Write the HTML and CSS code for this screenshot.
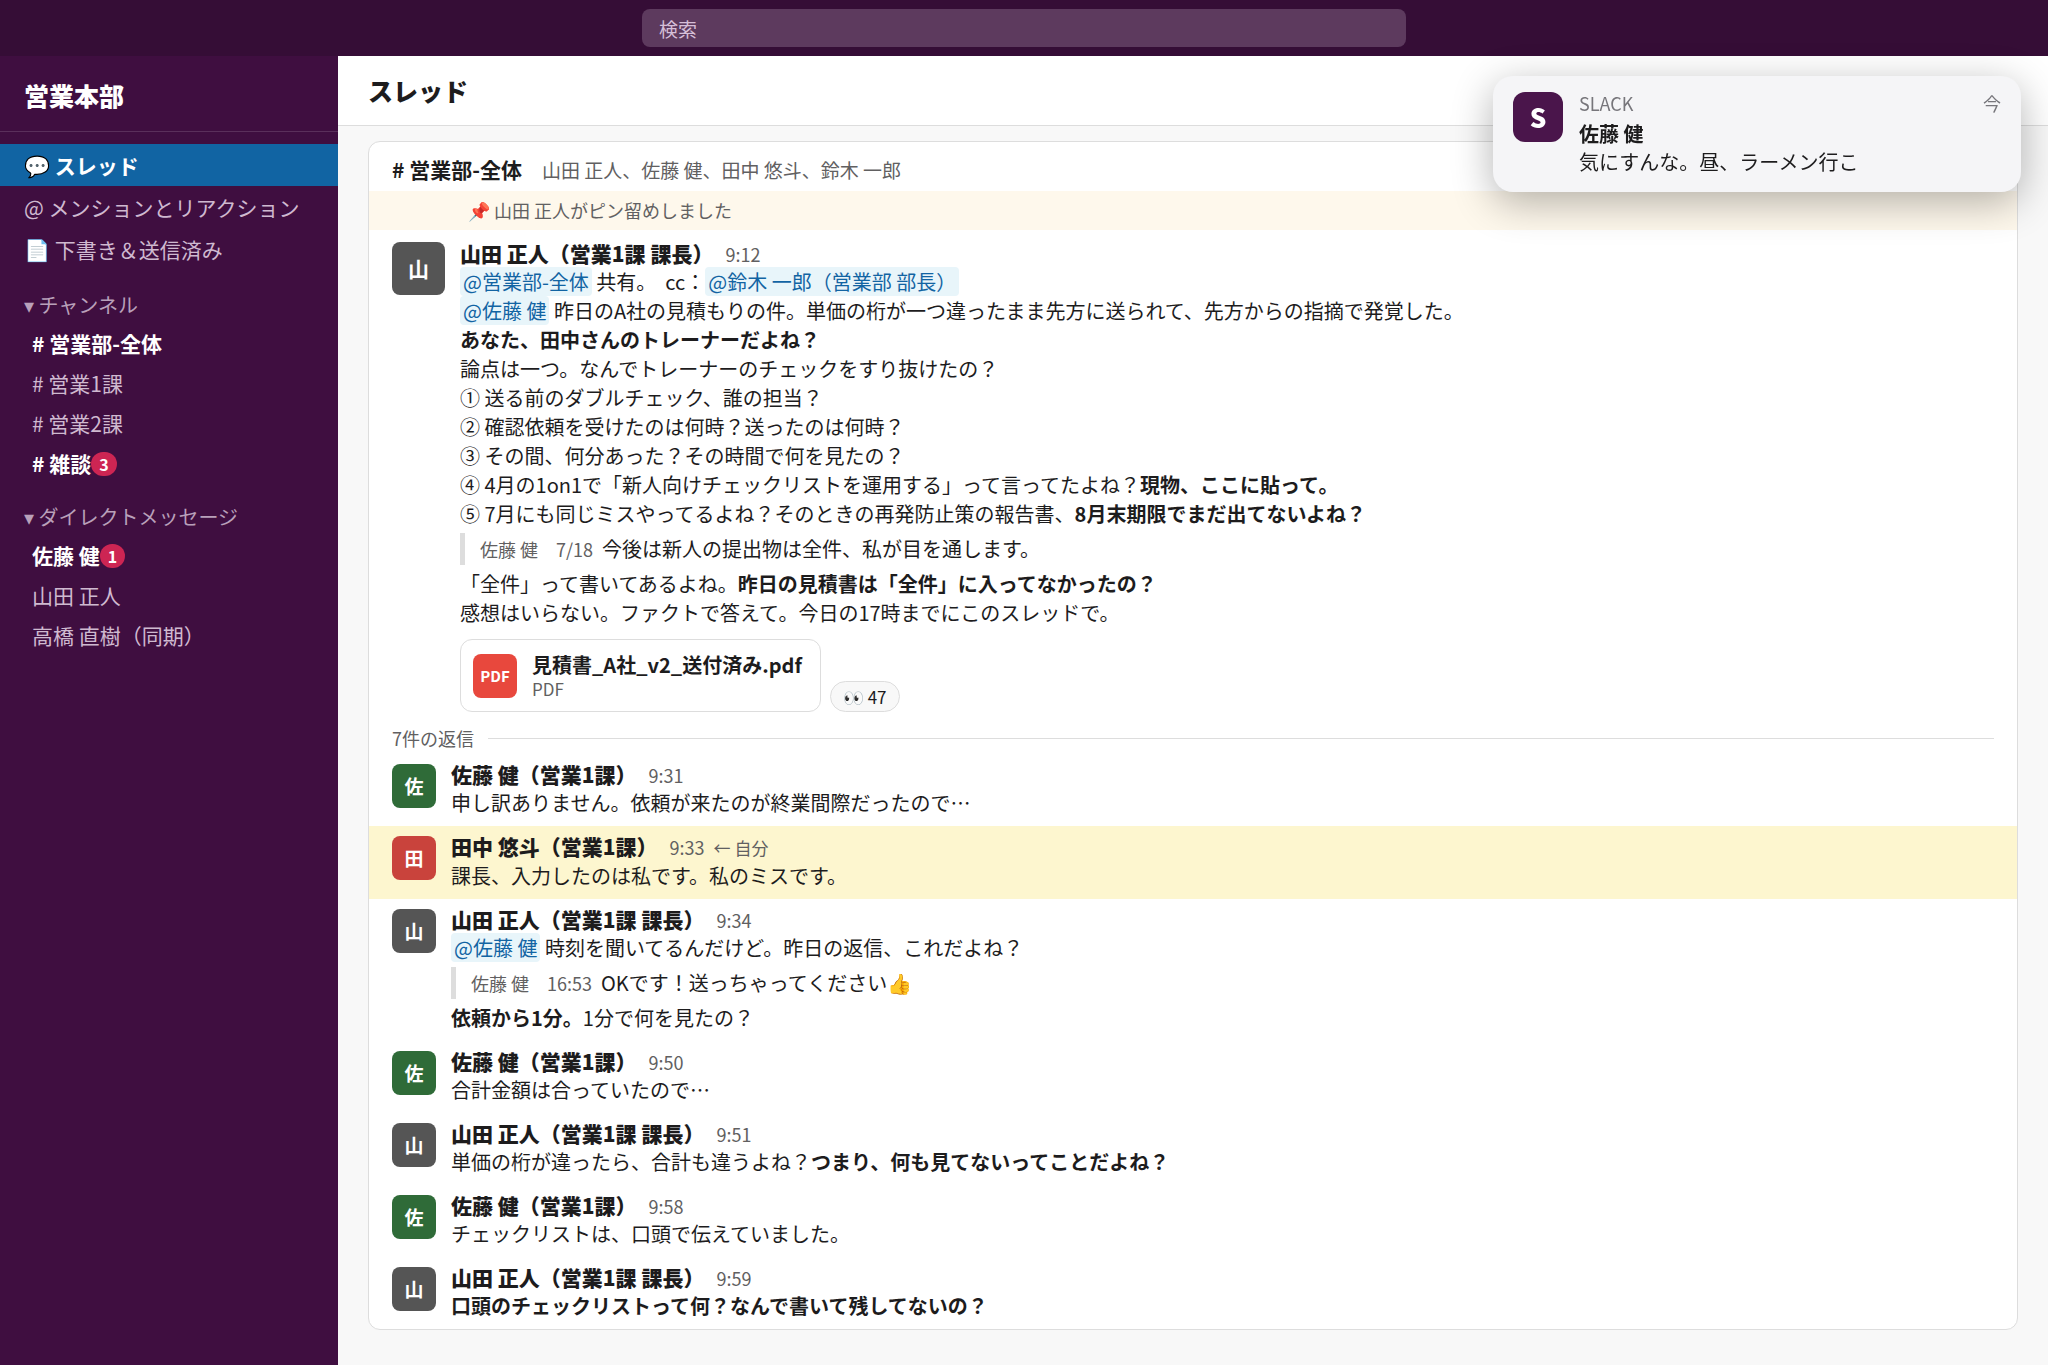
FILE: index.html
```html
<!DOCTYPE html>
<html lang="ja"><head>
  <meta charset="UTF-8"/>
  <meta name="viewport" content="width=device-width,initial-scale=1"/>
  <title>スレッド - 営業本部</title>
  <link rel="stylesheet" href="styles.css">
</head><body>
  <header class="topbar">
    <input class="search" type="search" placeholder="検索" aria-label="検索">
  </header>

  <div class="layout">
    <nav class="sidebar">
      <div class="workspace">営業本部</div>
      <ul class="nav-list">
        <li><a class="nav-item active" href="#threads">💬 スレッド</a></li>
        <li><a class="nav-item" href="#mentions">@ メンションとリアクション</a></li>
        <li><a class="nav-item" href="#drafts">📄 下書き＆送信済み</a></li>
      </ul>
      <h2 class="section-title">▾ チャンネル</h2>
      <ul class="channel-list">
        <li><a class="channel unread" href="#all"># 営業部-全体</a></li>
        <li><a class="channel" href="#sales1"># 営業1課</a></li>
        <li><a class="channel" href="#sales2"># 営業2課</a></li>
        <li><a class="channel unread" href="#random"># 雑談<span class="badge">3</span></a></li>
      </ul>
      <h2 class="section-title">▾ ダイレクトメッセージ</h2>
      <ul class="channel-list">
        <li><a class="channel unread" href="#sato">佐藤 健<span class="badge">1</span></a></li>
        <li><a class="channel" href="#yamada">山田 正人</a></li>
        <li><a class="channel" href="#takahashi">高橋 直樹（同期）</a></li>
      </ul>
    </nav>

    <main class="main">
      <h1 class="page-title">スレッド</h1>

      <section class="thread">
        <div class="thread-head">
          <strong class="thread-channel"># 営業部-全体</strong>
          <span class="thread-members">山田 正人、佐藤 健、田中 悠斗、鈴木 一郎</span>
        </div>
        <div class="pinned">📌 山田 正人がピン留めしました</div>

        <article class="message root">
          <div class="avatar gray">山</div>
          <div class="body">
            <div class="meta"><span class="name">山田 正人（営業1課 課長）</span><time class="time">9:12</time></div>
            <p><a class="mention" href="#all">@営業部-全体</a> 共有。&nbsp; cc：<a class="mention" href="#suzuki">@鈴木 一郎（営業部 部長）</a></p>
            <p><a class="mention" href="#sato">@佐藤 健</a> 昨日のA社の見積もりの件。単価の桁が一つ違ったまま先方に送られて、先方からの指摘で発覚した。</p>
            <p><b>あなた、田中さんのトレーナーだよね？</b></p>
            <p>論点は一つ。なんでトレーナーのチェックをすり抜けたの？</p>
            <p>① 送る前のダブルチェック、誰の担当？</p>
            <p>② 確認依頼を受けたのは何時？送ったのは何時？</p>
            <p>③ その間、何分あった？その時間で何を見たの？</p>
            <p>④ 4月の1on1で「新人向けチェックリストを運用する」って言ってたよね？<b>現物、ここに貼って。</b></p>
            <p>⑤ 7月にも同じミスやってるよね？そのときの再発防止策の報告書、<b>8月末期限でまだ出てないよね？</b></p>
            <blockquote class="quote"><span class="quote-meta">佐藤 健　7/18</span>今後は新人の提出物は全件、私が目を通します。</blockquote>
            <p>「全件」って書いてあるよね。<b>昨日の見積書は「全件」に入ってなかったの？</b></p>
            <p>感想はいらない。ファクトで答えて。今日の17時までにこのスレッドで。</p>
            <div class="extras">
              <a class="file" href="#file">
                <span class="file-icon">PDF</span>
                <span class="file-info"><span class="file-name">見積書_A社_v2_送付済み.pdf</span><span class="file-type">PDF</span></span>
              </a>
              <button class="reaction" type="button">👀 47</button>
            </div>
          </div>
        </article>

        <div class="reply-count">7件の返信</div>

        <article class="message">
          <div class="avatar green">佐</div>
          <div class="body">
            <div class="meta"><span class="name">佐藤 健（営業1課）</span><time class="time">9:31</time></div>
            <p>申し訳ありません。依頼が来たのが終業間際だったので…</p>
          </div>
        </article>
        <article class="message mine">
          <div class="avatar red">田</div>
          <div class="body">
            <div class="meta"><span class="name">田中 悠斗（営業1課）</span><time class="time">9:33</time><span class="self">← 自分</span></div>
            <p>課長、入力したのは私です。私のミスです。</p>
          </div>
        </article>
        <article class="message">
          <div class="avatar gray">山</div>
          <div class="body">
            <div class="meta"><span class="name">山田 正人（営業1課 課長）</span><time class="time">9:34</time></div>
            <p><a class="mention" href="#sato">@佐藤 健</a> 時刻を聞いてるんだけど。昨日の返信、これだよね？</p>
            <blockquote class="quote"><span class="quote-meta">佐藤 健　16:53</span>OKです！送っちゃってください👍</blockquote>
            <p><b>依頼から1分。</b>1分で何を見たの？</p>
          </div>
        </article>
        <article class="message">
          <div class="avatar green">佐</div>
          <div class="body">
            <div class="meta"><span class="name">佐藤 健（営業1課）</span><time class="time">9:50</time></div>
            <p>合計金額は合っていたので…</p>
          </div>
        </article>
        <article class="message">
          <div class="avatar gray">山</div>
          <div class="body">
            <div class="meta"><span class="name">山田 正人（営業1課 課長）</span><time class="time">9:51</time></div>
            <p>単価の桁が違ったら、合計も違うよね？<b>つまり、何も見てないってことだよね？</b></p>
          </div>
        </article>
        <article class="message">
          <div class="avatar green">佐</div>
          <div class="body">
            <div class="meta"><span class="name">佐藤 健（営業1課）</span><time class="time">9:58</time></div>
            <p>チェックリストは、口頭で伝えていました。</p>
          </div>
        </article>
        <article class="message">
          <div class="avatar gray">山</div>
          <div class="body">
            <div class="meta"><span class="name">山田 正人（営業1課 課長）</span><time class="time">9:59</time></div>
            <p><b>口頭のチェックリストって何？なんで書いて残してないの？</b></p>
          </div>
        </article>
      </section>
    </main>
  </div>

  <aside class="toast" role="status">
    <div class="toast-icon">S</div>
    <div class="toast-body">
      <div class="toast-top"><span>SLACK</span><span>今</span></div>
      <div class="toast-name">佐藤 健</div>
      <div class="toast-text">気にすんな。昼、ラーメン行こ</div>
    </div>
  </aside>
</body></html>
```

FILE: styles.css
```css
:root {
  --top-bg:    #350d36;
  --side-bg:   #3f0e40;
  --side-text: #cfb9d0;
  --active:    #1164a3;
  --ink:       #1d1c1d;
  --muted:     #616061;
  --line:      #dddddd;
}
* {box-sizing:border-box}
body {margin:0;min-height:100vh;display:flex;flex-direction:column;
      font-family:"Noto Sans CJK JP",sans-serif;font-size:20px;line-height:29px;
      color:var(--ink);background:#f8f8f8}
a {color:inherit;text-decoration:none}
ul {list-style:none;margin:0;padding:0}
p, h1, h2, blockquote {margin:0}

.topbar {height:56px;background:var(--top-bg);display:flex;align-items:center;justify-content:center}
.search {width:764px;max-width:60%;height:38px;padding:0 17px;border:0;border-radius:8px;
         background:#5d3a5e;color:#fff;font-family:inherit;font-size:19px}
.search::placeholder {color:#d6bfd8;opacity:1}

.layout {flex:1;display:flex}

/* sidebar */
.sidebar {flex:none;width:338px;background:var(--side-bg);color:var(--side-text);font-size:21px}
.workspace {padding:21px 24px 18px;font-size:25px;line-height:36px;font-weight:900;color:#fff;
            border-bottom:1px solid #5a2f5b}
.nav-list {padding:12px 0 1px}
.nav-item {display:block;padding:0 24px;line-height:42px}
.nav-item:hover, .channel:hover {background:#350d36}
.nav-item.active {background:var(--active);color:#fff;font-weight:700}
.section-title {margin-top:16px;padding:0 24px;font-size:20px;line-height:36px;font-weight:400;color:#b9a0ba}
.channel {display:flex;align-items:center;padding:0 32px;line-height:40px}
.channel.unread {color:#fff;font-weight:700}
.badge {margin-top:2px;padding:0 8px;border-radius:12px;background:#cd2553;color:#fff;
        font-size:16px;line-height:24px;font-weight:700}

/* thread */
.main {flex:1;min-width:0;padding-bottom:38px}
.page-title {padding:16px 30px 17px;font-size:25px;line-height:36px;font-weight:900;
             background:#fff;border-bottom:1px solid var(--line)}
.thread {margin:15px 30px 0;background:#fff;border:1px solid var(--line);border-radius:12px;overflow:hidden}
.thread-head {display:flex;align-items:baseline;gap:20px;padding:13px 23px 7px}
.thread-channel {font-size:21px}
.thread-members {font-size:19px;color:var(--muted)}
.pinned {padding:5px 23px 5px 99px;font-size:18px;color:var(--muted);background:#fef8ec}

.message {display:flex;gap:15px;padding:7px 23px 9px}
.message.root {padding-top:10px}
.message.mine {background:#fdf6cf}
.body {flex:1;min-width:0}
.avatar {flex:none;width:44px;height:44px;margin-top:3px;border-radius:8px;color:#fff;
         font-size:19px;line-height:44px;font-weight:700;text-align:center}
.root .avatar {width:53px;height:53px;font-size:21px;line-height:53px;margin-top:2px}
.gray {background:#555555}
.green {background:#2f6b38}
.red {background:#c9433c}
.meta {display:flex;align-items:baseline;line-height:26px}
.name {margin-right:12px;font-size:21px;font-weight:900}
.time {margin-right:9px;font-size:18px;color:var(--muted)}
.self {font-size:17px;color:var(--muted)}
.mention {padding:0 3px;border-radius:4px;background:#e8f5fa;color:#1264a3}
.quote {margin:5px 0 4px;padding:0 15px;border-left:5px solid var(--line);line-height:32px}
.quote-meta {margin-right:9px;font-size:18px;color:var(--muted)}

.extras {display:flex;align-items:flex-end;gap:9px;margin-top:12px}
.file {display:flex;align-items:center;gap:15px;padding:11px 18px 11px 12px;
       border:1px solid var(--line);border-radius:12px}
.file-icon {width:44px;border-radius:8px;background:#e8483d;color:#fff;
            font-size:15px;line-height:44px;font-weight:700;text-align:center}
.file-info {display:flex;flex-direction:column}
.file-name {font-weight:700;line-height:27px}
.file-type {font-size:17px;line-height:22px;color:var(--muted)}
.reaction {height:31px;padding:0 12px;border:1px solid var(--line);border-radius:16px;
           background:#f8f8f8;color:var(--ink);font-family:inherit;font-size:17px;line-height:24px}

.reply-count {display:flex;align-items:center;gap:14px;padding:3px 23px 1px;font-size:18px;color:var(--muted)}
.reply-count::after {content:"";flex:1;height:1px;background:var(--line)}

/* desktop notification over the page */
.toast {position:fixed;top:76px;right:27px;width:528px;display:flex;gap:16px;padding:14px 20px 16px;
        border-radius:20px;background:#f5f5f7;box-shadow:0 10px 40px rgba(0,0,0,0.3)}
.toast-icon {flex:none;width:50px;height:50px;margin-top:2px;border-radius:12px;background:#4a154b;color:#fff;
             font-size:26px;line-height:50px;font-weight:900;text-align:center}
.toast-body {flex:1}
.toast-top {display:flex;justify-content:space-between;font-size:18px;line-height:26px;color:#77767b}
.toast-name {margin-top:3px;font-weight:700}
.toast-text {line-height:28px}
```
